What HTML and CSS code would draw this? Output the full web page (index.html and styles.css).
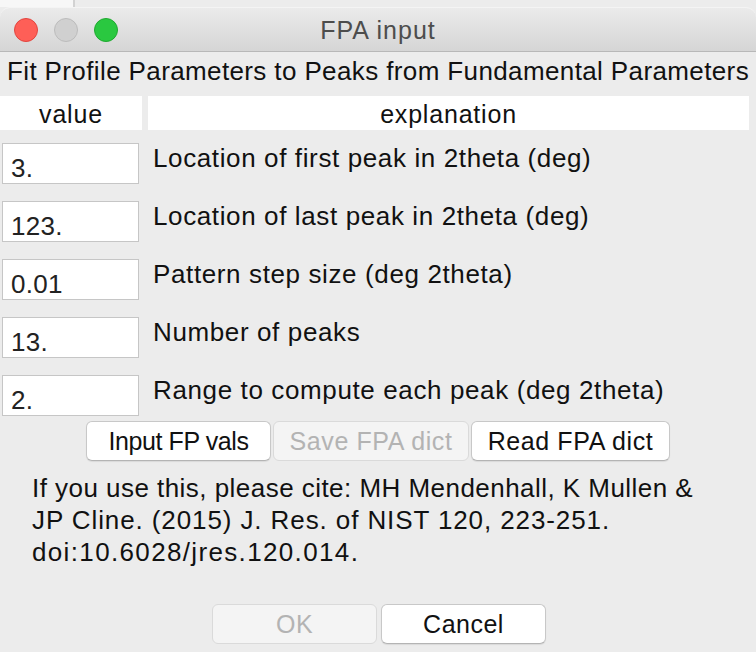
FILE: index.html
```html
<!DOCTYPE html>
<html>

<head>
    <meta charset="UTF-8">
    <title>FPA input</title>
    <link rel="stylesheet" href="styles.css">
</head>

<body>

    <!-- =========== Desktop strip =========== -->
    <div class="desk">
        <div class="deskLeft"></div>
        <div class="deskRight"></div>
    </div>

    <!-- =========== Window =========== -->
    <div class="window">
        <div class="titlebar">
            <div class="lights">
                <span class="light red"></span>
                <span class="light gray"></span>
                <span class="light green"></span>
            </div>
            <span class="wintitle">FPA input</span>
        </div>

        <div class="content">
            <div class="heading">Fit Profile Parameters to Peaks from Fundamental Parameters</div>

            <div class="table">
                <div class="head">value</div>
                <div class="head">explanation</div>

                <input class="field" type="text" value="3.">
                <div class="label">Location of first peak in 2theta (deg)</div>

                <input class="field" type="text" value="123.">
                <div class="label">Location of last peak in 2theta (deg)</div>

                <input class="field" type="text" value="0.01">
                <div class="label">Pattern step size (deg 2theta)</div>

                <input class="field" type="text" value="13.">
                <div class="label">Number of peaks</div>

                <input class="field" type="text" value="2.">
                <div class="label">Range to compute each peak (deg 2theta)</div>
            </div>

            <div class="buttons">
                <button class="btn wide1">Input FP vals</button>
                <button class="btn wide2" disabled>Save FPA dict</button>
                <button class="btn wide3">Read FPA dict</button>
            </div>

            <p class="cite">
                <span class="line">If you use this, please cite: MH Mendenhall, K Mullen &amp;</span>
                <span class="line line2">JP Cline. (2015) J. Res. of NIST 120, 223-251.</span>
                <span class="line line3">doi:10.6028/jres.120.014.</span>
            </p>

            <div class="dialogButtons">
                <button class="btn dlg" disabled>OK</button>
                <button class="btn dlg">Cancel</button>
            </div>
        </div>
    </div>

</body>

</html>
```

FILE: styles.css
```css
* {
    font-family: "Liberation Sans", Arial, sans-serif;
    margin: 0;
    padding: 0;
    box-sizing: border-box;
}

body {
    width: 756px;
    height: 652px;
    overflow: hidden;
    background: #ececec;
}

.desk {
    display: flex;
    height: 7px;
}

.deskLeft {
    width: 75px;
    background: #f7f7f7;
    border-right: 2px solid #d2d2d2;
}

.deskRight {
    flex: 1;
    background: #ececec;
}

.window {
    background: #ececec;
    height: 645px;
}

.titlebar {
    position: relative;
    height: 45px;
    display: flex;
    align-items: center;
    justify-content: center;
    background: linear-gradient(#ebebeb, #d5d5d5);
    border-top: 1px solid #f4f4f4;
    border-bottom: 1px solid #b8b8b8;
    border-radius: 10px 10px 0 0;
}

.lights {
    position: absolute;
    left: 14px;
    top: 10px;
    display: flex;
    gap: 16px;
}

.light {
    width: 24px;
    height: 24px;
    border-radius: 50%;
}

.red {
    background: #fe5f57;
    border: 1px solid #e2453f;
}

.gray {
    background: #d0d0d0;
    border: 1px solid #bcbcbc;
}

.green {
    background: #2ac840;
    border: 1px solid #1fa930;
}

.wintitle {
    font-size: 25px;
    letter-spacing: 1px;
    color: #4d4d4d;
    margin-top: 2px;
}

.content {
    display: flex;
    flex-direction: column;
}

.heading {
    height: 44px;
    padding-top: 4px;
    text-align: center;
    font-size: 26px;
    letter-spacing: 0.38px;
    color: #111;
}

.table {
    display: grid;
    grid-template-columns: 142px 1fr;
    column-gap: 6px;
    row-gap: 17px;
    padding-right: 7px;
}

.head {
    height: 34px;
    line-height: 37px;
    background: #fff;
    text-align: center;
    font-size: 25px;
    letter-spacing: 0.8px;
    color: #111;
    margin-bottom: -4px;
}

.field {
    width: 137px;
    height: 41px;
    margin-left: 2px;
    border: 1px solid #c6c6c6;
    background: #fff;
    font-size: 26px;
    letter-spacing: 0.3px;
    color: #222;
    padding: 9px 0 0 8px;
    outline: none;
}

.label {
    font-size: 26px;
    letter-spacing: 0.62px;
    color: #111;
    padding-left: 5px;
}

.buttons {
    display: flex;
    justify-content: center;
    gap: 2px;
    margin-top: 5px;
}

.btn {
    height: 40px;
    background: #fff;
    border: 1px solid #c8c8c8;
    border-bottom-color: #b4b4b4;
    border-radius: 6px;
    font-size: 25px;
    color: #111;
    box-shadow: 0 1px 1px rgba(0, 0, 0, 0.08);
}

.btn:disabled {
    background: #f4f4f4;
    color: #b3b3b3;
    border-color: #dadada;
    box-shadow: none;
}

.wide1 {
    width: 185px;
    letter-spacing: -0.4px;
}

.wide2 {
    width: 196px;
    letter-spacing: 0.6px;
}

.wide3 {
    width: 199px;
    letter-spacing: 0.6px;
}

.cite {
    display: flex;
    flex-direction: column;
    font-size: 26px;
    line-height: 32px;
    letter-spacing: 0.46px;
    color: #111;
    padding: 11px 0 0 32px;
}

.cite .line2 {
    letter-spacing: 0.9px;
}

.cite .line3 {
    letter-spacing: 1.35px;
}

.dialogButtons {
    display: flex;
    justify-content: center;
    gap: 4px;
    margin-top: 36px;
    padding-left: 2px;
}

.dlg {
    width: 165px;
    letter-spacing: 0.5px;
}
```
